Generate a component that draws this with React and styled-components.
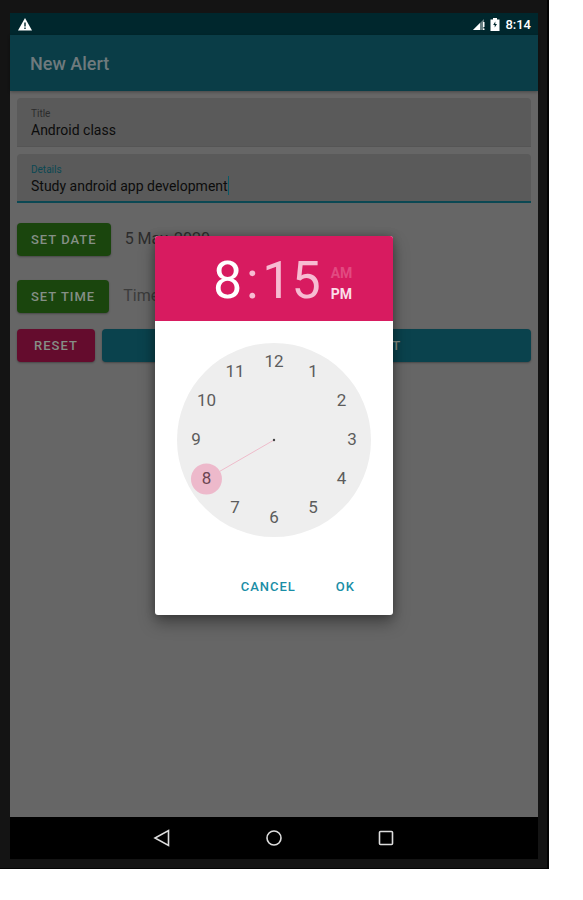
import React from 'react'
import styled, {createGlobalStyle} from "styled-components"

const hours = [12, 1, 2, 3, 4, 5, 6, 7, 8, 9, 10, 11]

const place = (hour, radius) => {
    const angle = (hour * Math.PI) / 6
    return {
        x: 97 + radius * Math.sin(angle),
        y: 97 - radius * Math.cos(angle)
    }
}

const App = () => {
    const [title, setTitle] = React.useState("Android class")
    const [details, setDetails] = React.useState("Study android app development")
    const [hour, setHour] = React.useState(8)
    const [period, setPeriod] = React.useState("PM")

    const knob = place(hour, 78)
    const handEnd = place(hour, 63)

    return (
        <Device>
            <GlobalStyle/>
            <Screen>
                <StatusBar>
                    <svg width="14" height="13" viewBox="0 0 14 13">
                        <path d="M7 0 L14 12.5 H0 Z" fill="#fff"/>
                        <path d="M6.3 4.5h1.4v4H6.3zM6.3 9.5h1.4v1.4H6.3z" fill="#00272d"/>
                    </svg>
                    <StatusRight>
                        <svg width="12" height="11" viewBox="0 0 12 11">
                            <path d="M0 11 L11 0 V11 Z" fill="#fff" opacity="0.4"/>
                            <path d="M0 11 L7 4 V11 Z" fill="#fff"/>
                            <path d="M10 3h1.5v5H10zM10 9.5h1.5V11H10z" fill="#fff"/>
                        </svg>
                        <svg width="10" height="13" viewBox="0 0 10 13">
                            <path d="M3 0h4v1.5h2.5V13H.5V1.5H3z" fill="#fff"/>
                            <path d="M5.3 3.5 L3.2 7h1.5v2.5L7 6H5.3z" fill="#00272d"/>
                        </svg>
                        <span>8:14</span>
                    </StatusRight>
                </StatusBar>
                <AppBar>
                    <h1>New Alert</h1>
                </AppBar>
                <Form onSubmit={(e)=>{
                    e.preventDefault()
                }}>
                    <Field>
                        <Label htmlFor="title">Title</Label>
                        <Input id="title"
                        value={title}
                        onChange={(e)=>{
                            setTitle(e.target.value)
                        }}/>
                    </Field>
                    <Field $active>
                        <Label htmlFor="details" $active>Details</Label>
                        <InputLine>
                            <Input id="details"
                            value={details}
                            onChange={(e)=>{
                                setDetails(e.target.value)
                            }}/>
                            <Caret/>
                        </InputLine>
                    </Field>
                    <PickRow>
                        <Button type="button" $bg="#1a450d">Set date</Button>
                        <Value $cl="#2c2c2c">5 May, 2020</Value>
                    </PickRow>
                    <PickRow>
                        <Button type="button" $bg="#1a450d">Set time</Button>
                        <Value $cl="#3c3c3c">Time</Value>
                    </PickRow>
                    <ActionRow>
                        <Button type="reset" $bg="#640c2d">Reset</Button>
                        <Button type="submit" $bg="#0a424d" $grow>Schedule a new alert</Button>
                    </ActionRow>
                </Form>
                <NavBar>
                    <NavButton aria-label="Back">
                        <svg width="18" height="18" viewBox="0 0 18 18">
                            <path d="M15.5 1.5 V16.5 L2 9 Z" fill="none" stroke="#ddd" strokeWidth="1.6"/>
                        </svg>
                    </NavButton>
                    <NavButton aria-label="Home">
                        <svg width="18" height="18" viewBox="0 0 18 18">
                            <circle cx="9" cy="9" r="7" fill="none" stroke="#ddd" strokeWidth="1.6"/>
                        </svg>
                    </NavButton>
                    <NavButton aria-label="Recent apps">
                        <svg width="18" height="18" viewBox="0 0 18 18">
                            <rect x="2.5" y="2.5" width="13" height="13" rx="1" fill="none" stroke="#ddd" strokeWidth="1.6"/>
                        </svg>
                    </NavButton>
                </NavBar>
                <Overlay>
                    <Dialog role="dialog" aria-label="Time picker">
                        <Header>
                            <Digit type="button" $on>{hour}</Digit>
                            <Colon>:</Colon>
                            <Digit type="button">15</Digit>
                            <Periods>
                                {["AM", "PM"].map((item)=>(
                                    <Period key={item} type="button" $on={item === period} onClick={()=>{
                                        setPeriod(item)
                                    }}>{item}</Period>
                                ))}
                            </Periods>
                        </Header>
                        <Clock viewBox="0 0 194 194">
                            <circle cx="97" cy="97" r="97" fill="#eeeeee"/>
                            <line x1="97" y1="97" x2={handEnd.x} y2={handEnd.y} stroke="#eebccb"/>
                            <circle cx={knob.x} cy={knob.y} r="15.5" fill="#edb9cb"/>
                            <circle cx="97" cy="97" r="1.2" fill="#444"/>
                            {hours.map((item)=>{
                                const spot = place(item, 78)
                                return (
                                    <Hour key={item} x={spot.x} y={spot.y + 5} $on={item === hour} onClick={()=>{
                                        setHour(item)
                                    }}>{item}</Hour>
                                )
                            })}
                        </Clock>
                        <DialogActions>
                            <TextButton type="button">Cancel</TextButton>
                            <TextButton type="button">OK</TextButton>
                        </DialogActions>
                    </Dialog>
                </Overlay>
            </Screen>
        </Device>
    )
}

export default App

const GlobalStyle = createGlobalStyle`
* {
box-sizing: border-box;
}
body {
margin: 0;
background-color: #fff;
font-family: Roboto, "Liberation Sans", sans-serif;
}
button, input {
font-family: inherit;
border: none;
outline: none;
margin: 0;
padding: 0;
background-color: transparent;
}
svg {
display: block;
}
`

const Device = styled.div`
display: flex;
min-height: calc(100vh - 31px);
margin: 0 34px 31px 0;
padding: 13px 9px 9px 10px;
background-color: #141414;
border-right: 2px solid #030303;
border-bottom: 1px solid #030303;
`

const Screen = styled.div`
position: relative;
display: flex;
flex-direction: column;
flex: 1;
min-width: 0;
background-color: #666;
`

const StatusBar = styled.div`
display: flex;
justify-content: space-between;
align-items: center;
height: 22px;
padding: 0 7px 0 8px;
background-color: #00272d;
`

const StatusRight = styled.div`
display: flex;
align-items: center;
gap: 5px;
font-size: 13px;
font-weight: 500;
color: #fff;
`

const AppBar = styled.header`
display: flex;
align-items: center;
height: 56px;
padding: 0 20px;
background-color: #0a3d47;
box-shadow: 0 1px 3px rgba(0, 0, 0, 0.3);

h1 {
margin: 0;
font-size: 18px;
font-weight: 500;
color: #6f7a7d;
}
`

const Form = styled.form`
display: flex;
flex-direction: column;
flex: 1;
padding: 7px;
`

const Field = styled.div`
display: flex;
flex-direction: column;
height: 49px;
margin-bottom: 7px;
padding: 9px 14px 0;
border-radius: 4px 4px 0 0;
background-color: #5a5a5a;
border-bottom: ${({$active})=>$active ? "2px solid #0b4853" : "1px solid #555"};
`

const Label = styled.label`
font-size: 10px;
line-height: 13px;
color: ${({$active})=>$active ? "#0b4853" : "#2c2c2c"};
`

const InputLine = styled.div`
display: flex;
`

const Input = styled.input`
field-sizing: content;
height: 21px;
font-size: 14px;
line-height: 21px;
color: #0c0c0c;
`

const Caret = styled.span`
width: 1px;
height: 19px;
background-color: #0b5a68;
`

const Row = styled.div`
display: flex;
`

const PickRow = styled(Row)`
gap: 14px;
margin-top: 13px;
margin-bottom: 11px;
`

const ActionRow = styled(Row)`
gap: 7px;
margin-top: 5px;
`

const Button = styled.button`
flex: ${({$grow})=>$grow ? "1" : "none"};
min-width: 78px;
height: 33px;
padding: 0 14px;
border-radius: 4px;
background-color: ${({$bg})=>$bg};
box-shadow: 0 1px 2px rgba(0, 0, 0, 0.3);
color: #858f86;
font-size: 13px;
font-weight: 500;
letter-spacing: 1px;
text-transform: uppercase;
cursor: pointer;
`

const Value = styled.span`
font-size: 16px;
line-height: 32px;
color: ${({$cl})=>$cl};
`

const NavBar = styled.nav`
display: flex;
justify-content: center;
align-items: center;
gap: 64px;
height: 42px;
background-color: #000;
`

const NavButton = styled.button`
display: flex;
justify-content: center;
width: 48px;
cursor: pointer;
`

const Overlay = styled.div`
position: absolute;
inset: 22px 0 44px;
display: flex;
justify-content: center;
align-items: center;
`

const Dialog = styled.div`
display: flex;
flex-direction: column;
align-items: center;
width: 238px;
border-radius: 3px;
overflow: hidden;
background-color: #fff;
box-shadow: 0 8px 16px rgba(0, 0, 0, 0.35), 0 0 8px rgba(0, 0, 0, 0.25);
`

const Header = styled.div`
display: flex;
align-items: center;
align-self: stretch;
height: 85px;
padding: 6px 0 0 58px;
background-color: #d81b60;
`

const Digit = styled.button`
font-size: 52px;
line-height: 60px;
color: ${({$on})=>$on ? "#fff" : "#f7bcd2"};
cursor: pointer;
`

const Colon = styled.span`
width: 20px;
font-size: 52px;
line-height: 60px;
text-align: center;
color: #f7bcd2;
`

const Periods = styled.div`
display: flex;
flex-direction: column;
margin-left: 10px;
padding-top: 6px;
`

const Period = styled.button`
font-size: 14px;
line-height: 21px;
font-weight: 700;
text-align: left;
color: ${({$on})=>$on ? "#fbdde8" : "#e24a81"};
cursor: pointer;
`

const Clock = styled.svg`
width: 194px;
height: 194px;
margin-top: 22px;
`

const Hour = styled.text`
font-size: 17px;
text-anchor: middle;
fill: ${({$on})=>$on ? "#6b4552" : "#5c5c5c"};
cursor: pointer;
`

const DialogActions = styled.div`
display: flex;
justify-content: flex-end;
align-self: stretch;
gap: 40px;
padding: 40px 38px 18px;
`

const TextButton = styled.button`
font-size: 13px;
line-height: 20px;
font-weight: 500;
letter-spacing: 1px;
text-transform: uppercase;
color: #1a8ea6;
cursor: pointer;
`
